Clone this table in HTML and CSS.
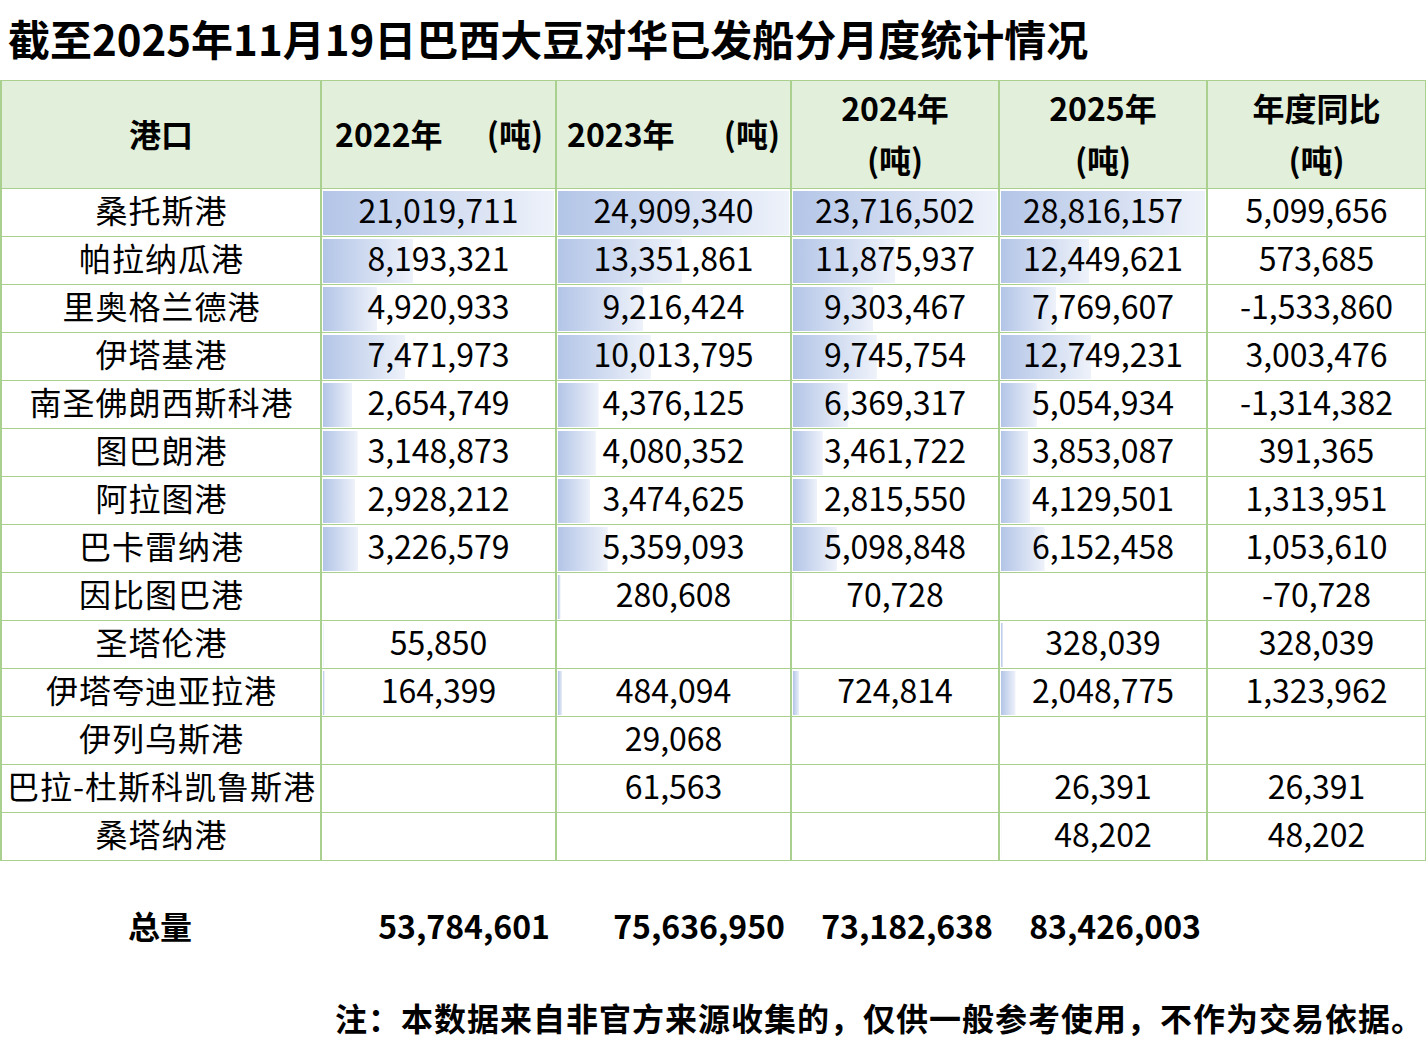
FILE: index.html
```html
<!DOCTYPE html>
<html lang="zh-CN">
<head>
<meta charset="utf-8">
<title>巴西大豆对华已发船分月度统计</title>
<link rel="stylesheet" href="styles.css">
</head>
<body>
<h1 class="title">截至2025年11月19日巴西大豆对华已发船分月度统计情况</h1>
<table class="stats">
  <colgroup>
    <col class="c-port"><col class="c-y22"><col class="c-y23"><col class="c-y24"><col class="c-y25"><col class="c-yoy">
  </colgroup>
  <thead>
    <tr>
      <th>港口</th>
      <th><div class="split"><span>2022年</span><span>(吨)</span></div></th>
      <th><div class="split split-b"><span>2023年</span><span>(吨)</span></div></th>
      <th><div class="stack">2024年<br>(吨)</div></th>
      <th><div class="stack">2025年<br>(吨)</div></th>
      <th><div class="stack">年度同比<br>(吨)</div></th>
    </tr>
  </thead>
  <tbody>
    <tr><td class="port">桑托斯港</td><td class="bar" style="--w:100%">21,019,711</td><td class="bar" style="--w:100%">24,909,340</td><td class="bar" style="--w:100%">23,716,502</td><td class="bar" style="--w:100%">28,816,157</td><td>5,099,656</td></tr>
    <tr><td class="port">帕拉纳瓜港</td><td class="bar" style="--w:38.98%">8,193,321</td><td class="bar" style="--w:53.6%">13,351,861</td><td class="bar" style="--w:50.07%">11,875,937</td><td class="bar" style="--w:43.2%">12,449,621</td><td>573,685</td></tr>
    <tr><td class="port">里奥格兰德港</td><td class="bar" style="--w:23.41%">4,920,933</td><td class="bar" style="--w:37%">9,216,424</td><td class="bar" style="--w:39.23%">9,303,467</td><td class="bar" style="--w:26.96%">7,769,607</td><td>-1,533,860</td></tr>
    <tr><td class="port">伊塔基港</td><td class="bar" style="--w:35.55%">7,471,973</td><td class="bar" style="--w:40.2%">10,013,795</td><td class="bar" style="--w:41.09%">9,745,754</td><td class="bar" style="--w:44.24%">12,749,231</td><td>3,003,476</td></tr>
    <tr><td class="port">南圣佛朗西斯科港</td><td class="bar" style="--w:12.63%">2,654,749</td><td class="bar" style="--w:17.57%">4,376,125</td><td class="bar" style="--w:26.86%">6,369,317</td><td class="bar" style="--w:17.54%">5,054,934</td><td>-1,314,382</td></tr>
    <tr><td class="port">图巴朗港</td><td class="bar" style="--w:14.98%">3,148,873</td><td class="bar" style="--w:16.38%">4,080,352</td><td class="bar" style="--w:14.6%">3,461,722</td><td class="bar" style="--w:13.37%">3,853,087</td><td>391,365</td></tr>
    <tr><td class="port">阿拉图港</td><td class="bar" style="--w:13.93%">2,928,212</td><td class="bar" style="--w:13.95%">3,474,625</td><td class="bar" style="--w:11.87%">2,815,550</td><td class="bar" style="--w:14.33%">4,129,501</td><td>1,313,951</td></tr>
    <tr><td class="port">巴卡雷纳港</td><td class="bar" style="--w:15.35%">3,226,579</td><td class="bar" style="--w:21.51%">5,359,093</td><td class="bar" style="--w:21.5%">5,098,848</td><td class="bar" style="--w:21.35%">6,152,458</td><td>1,053,610</td></tr>
    <tr><td class="port">因比图巴港</td><td></td><td class="bar" style="--w:1.13%">280,608</td><td class="bar" style="--w:0.3%">70,728</td><td></td><td>-70,728</td></tr>
    <tr><td class="port">圣塔伦港</td><td class="bar" style="--w:0.27%">55,850</td><td></td><td></td><td class="bar" style="--w:1.14%">328,039</td><td>328,039</td></tr>
    <tr><td class="port">伊塔夸迪亚拉港</td><td class="bar" style="--w:0.78%">164,399</td><td class="bar" style="--w:1.94%">484,094</td><td class="bar" style="--w:3.06%">724,814</td><td class="bar" style="--w:7.11%">2,048,775</td><td>1,323,962</td></tr>
    <tr><td class="port">伊列乌斯港</td><td></td><td class="bar" style="--w:0.12%">29,068</td><td></td><td></td><td></td></tr>
    <tr><td class="port">巴拉-杜斯科凯鲁斯港</td><td></td><td class="bar" style="--w:0.25%">61,563</td><td></td><td class="bar" style="--w:0.09%">26,391</td><td>26,391</td></tr>
    <tr><td class="port">桑塔纳港</td><td></td><td></td><td></td><td class="bar" style="--w:0.17%">48,202</td><td>48,202</td></tr>
  </tbody>
</table>
<div class="totals">
  <div class="t-label">总量</div>
  <div class="t-num">53,784,601</div>
  <div class="t-num">75,636,950</div>
  <div class="t-num">73,182,638</div>
  <div class="t-num">83,426,003</div>
  <div></div>
</div>
<p class="note">注：本数据来自非官方来源收集的，仅供一般参考使用，不作为交易依据。</p>
</body>
</html>
```
FILE: styles.css
```css
html, body {
  margin: 0;
  padding: 0;
  background: #ffffff;
}
body {
  width: 1426px;
  font-family: "Noto Sans CJK SC", "Noto Sans", sans-serif;
  color: #000000;
}
.title {
  margin: 0;
  height: 80px;
  box-sizing: border-box;
  padding: 0 0 4px 8px;
  line-height: 76px;
  font-size: 42px;
  font-weight: 700;
  white-space: nowrap;
}
.stats {
  border-collapse: collapse;
  table-layout: fixed;
  width: 1425px;
  font-size: 32px;
}
.c-port { width: 320px; }
.c-y22 { width: 235px; }
.c-y23 { width: 235px; }
.c-y24 { width: 208px; }
.c-y25 { width: 208px; }
.c-yoy { width: 219px; }
.stats th,
.stats td {
  border: 1px solid #a9d08e;
  border-left-width: 2px;
  border-right-width: 2px;
  padding: 0;
  text-align: center;
  white-space: nowrap;
}
.stats th {
  background: #e2efda;
  font-weight: 700;
  height: 107px;
  box-sizing: border-box;
  padding-bottom: 3px;
  line-height: 52px;
}
.stats td {
  height: 47px;
  box-sizing: border-box;
  padding-bottom: 6px;
  line-height: 41px;
  font-weight: 400;
}
.stats td.port {
  letter-spacing: 1px;
  text-indent: 1px;
}
.split {
  display: flex;
  justify-content: space-between;
  padding: 0 12px 0 13px;
}
.split-b {
  padding: 0 10px 0 10px;
}
.stack {
  line-height: 52px;
}
.bar {
  background-image: linear-gradient(to right, #b3c5e7 0%, #eef2fa 100%);
  background-repeat: no-repeat;
  background-origin: border-box;
  background-position: 2px 2px;
  background-size: calc((100% - 4px) * var(--w) / 100%) calc(100% - 4px);
}
.totals {
  display: grid;
  grid-template-columns: 320px 235px 235px 208px 208px 219px;
  height: 128px;
  align-items: center;
  font-size: 32px;
  font-weight: 700;
  line-height: 40px;
}
.t-label {
  text-align: center;
}
.t-num {
  text-align: right;
  padding-right: 5px;
}
.note {
  margin: 0;
  height: 56px;
  line-height: 56px;
  width: 1424px;
  text-align: right;
  font-size: 32px;
  font-weight: 700;
  letter-spacing: 1px;
  white-space: nowrap;
}
```
